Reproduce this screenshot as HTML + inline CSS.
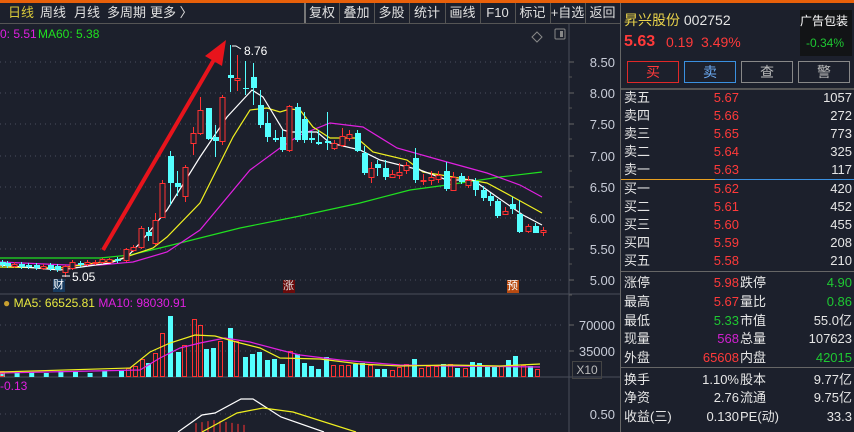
<!DOCTYPE html>
<html><head><meta charset="utf-8"><style>
*{margin:0;padding:0;box-sizing:border-box}
body{width:854px;height:432px;overflow:hidden;background:#1c202c;font-family:"Liberation Sans","Noto Sans CJK SC",sans-serif;color:#e0e0e0;position:relative}
.a{position:absolute;white-space:nowrap}
.t{font-size:13px;line-height:16px}
.r{color:#ff3a3a}.g{color:#1ec832}.w{color:#e6e6e6}.y{color:#e8d24a}
.btn{position:absolute;top:61px;height:22px;width:52px;border:1px solid #888;text-align:center;font-size:14px;line-height:20px;color:#bbb}
.row{position:absolute;left:624px;width:228px;height:18px;font-size:13px;line-height:18px}
.row span{position:absolute}
</style></head><body>
<div class="a" style="left:0;top:0;width:854px;height:3px;background:#e8600a"></div>
<div class="a t" style="left:8px;top:5px;color:#d8c83a">日线</div>
<div class="a t" style="left:40px;top:5px">周线</div>
<div class="a t" style="left:74px;top:5px">月线</div>
<div class="a t" style="left:107px;top:5px">多周期</div>
<div class="a t" style="left:150px;top:5px">更多 〉</div>
<div class="a" style="left:0;top:23px;width:620px;height:1px;background:#555"></div>
<div class="a" style="left:304px;top:3px;width:2px;height:20px;background:#777"></div>
<div id="tb"></div>
<div class="a" style="left:0;top:27px;font-size:12px;color:#e020e0">0: 5.51</div>
<div class="a" style="left:38px;top:27px;font-size:12px;color:#20e020">MA60: 5.38</div>
<svg class="a" style="left:0;top:0" width="620" height="432" id="sv"></svg>
<div class="a" style="left:3px;top:296px;font-size:12px;color:#e8e840"><span style="color:#c8a030">●</span> MA5: 66525.81 <span style="color:#e020e0">MA10: 98030.91</span></div>
<div class="a" style="left:0;top:379px;font-size:12px;color:#e020e0">-0.13</div>
<div class="a" style="left:572px;top:361px;width:30px;height:18px;border:1px solid #444;font-size:12px;line-height:16px;text-align:center;color:#bbb">X10</div>
<div class="a" style="left:53px;top:279px;width:12px;height:13px;background:#173a5e;font-size:11px;line-height:13px;color:#fff">财</div>
<div class="a" style="left:283px;top:280px;width:12px;height:13px;background:#6a0a0a;font-size:11px;line-height:13px;color:#ddd">涨</div>
<div class="a" style="left:507px;top:280px;width:12px;height:13px;background:#b84a10;font-size:11px;line-height:13px;color:#fff">预</div>
<div class="a" style="left:244px;top:44px;font-size:12px;color:#fff">8.76</div>
<div class="a" style="left:72px;top:270px;font-size:12px;color:#fff">5.05</div>
<!-- right panel -->
<div class="a" style="left:620px;top:3px;width:1px;height:429px;background:#666"></div>
<div class="a" style="left:624px;top:10px;font-size:14px"><span class="y">昇兴股份</span> <span class="w">002752</span></div>
<div class="a" style="left:800px;top:10px;width:52px;height:46px;background:#121416"></div>
<div class="a" style="left:800px;top:12px;font-size:12px;color:#fff">广告包装</div>
<div class="a" style="left:806px;top:36px;font-size:12px;color:#1ec832">-0.34%</div>
<div class="a" style="left:624px;top:33px;font-size:16px;font-weight:bold;color:#ff3a3a">5.63</div>
<div class="a" style="left:666px;top:34px;font-size:14px;color:#ff3a3a">0.19 &nbsp;3.49%</div>
<div class="btn" style="left:627px;border-color:#e02828;color:#ff3a3a">买</div>
<div class="btn" style="left:684px;border-color:#3a90e0;color:#6aa8f0">卖</div>
<div class="btn" style="left:741px">查</div>
<div class="btn" style="left:798px">警</div>
<div class="a" style="left:621px;top:88px;width:233px;height:2px;background:#555"></div>
<div class="a" style="left:621px;top:179px;width:94px;height:1px;background:#e8a020"></div>
<div class="a" style="left:715px;top:179px;width:139px;height:1px;background:#3a90e0"></div>
<div class="a" style="left:621px;top:271px;width:233px;height:1px;background:#666"></div>
<div class="a" style="left:621px;top:367px;width:233px;height:1px;background:#666"></div>
<div id="rp"></div>
<script>
var h='';
[['复权',305,339],['叠加',339,374],['多股',374,409],['统计',409,445],['画线',445,480],['F10',480,515],['标记',515,550],['+自选',550,585],['返回',585,620]].forEach(function(b){
h+='<div class="a t" style="left:'+b[1]+'px;top:5px;width:'+(b[2]-b[1])+'px;text-align:center">'+b[0]+'</div><div class="a" style="left:'+b[2]+'px;top:3px;width:1px;height:20px;background:#555"></div>';});
document.getElementById('tb').innerHTML=h;
h='';
var ob=[['卖五','5.67','1057',98],['卖四','5.66','272',116],['卖三','5.65','773',134],['卖二','5.64','325',152],['卖一','5.63','117',170],['买一','5.62','420',189],['买二','5.61','452',207],['买三','5.60','455',225],['买四','5.59','208',243],['买五','5.58','210',261]];
ob.forEach(function(o){h+='<div class="row" style="top:'+(o[3]-9)+'px"><span class="w" style="left:0">'+o[0]+'</span><span class="r" style="right:113px">'+o[1]+'</span><span class="w" style="right:0">'+o[2]+'</span></div>';});
var st=[['涨停','5.98','r','跌停','4.90','g',283],['最高','5.67','r','量比','0.86','g',302],['最低','5.33','g','市值','55.0亿','w',321],['现量','568','m','总量','107623','w',339],['外盘','65608','r','内盘','42015','g',358],['换手','1.10%','w','股本','9.77亿','w',380],['净资','2.76','w','流通','9.75亿','w',398],['收益(三)','0.130','w','PE(动)','33.3','w',417]];
st.forEach(function(o){var c=o[2]=='m'?'style="color:#d020d0;right:113px"':'class="'+o[2]+'" style="right:113px"';
h+='<div class="row" style="top:'+(o[6]-9)+'px"><span class="w" style="left:0">'+o[0]+'</span><span '+c+'>'+o[1]+'</span><span class="w" style="left:116px">'+o[3]+'</span><span class="'+o[5]+'" style="right:0">'+o[4]+'</span></div>';});
document.getElementById('rp').innerHTML=h;
// svg
var s='';
s+='<line x1="569" y1="24" x2="569" y2="432" stroke="#4a4e5a"/>';
s+='<line x1="0" y1="294" x2="620" y2="294" stroke="#4a4e5a"/><line x1="0" y1="377" x2="620" y2="377" stroke="#4a4e5a"/>';
[['8.50',62],['8.00',93],['7.50',124],['7.00',156],['6.50',187],['6.00',218],['5.50',249],['5.00',280]].forEach(function(p){
s+='<line x1="0" y1="'+p[1]+'" x2="565" y2="'+p[1]+'" stroke="#4a4e5e" stroke-dasharray="1,4"/><line x1="569" y1="'+p[1]+'" x2="574" y2="'+p[1]+'" stroke="#666"/><line x1="569" y1="'+(p[1]+15)+'" x2="572" y2="'+(p[1]+15)+'" stroke="#555"/>';
s+='<text x="615" y="'+(p[1]+5)+'" text-anchor="end" font-size="13" fill="#c8ccd8" font-family="Liberation Sans">'+p[0]+'</text>';});
[['70000',325],['35000',351]].forEach(function(p){s+='<line x1="0" y1="'+p[1]+'" x2="565" y2="'+p[1]+'" stroke="#4a4e5e" stroke-dasharray="1,4"/><line x1="569" y1="'+p[1]+'" x2="574" y2="'+p[1]+'" stroke="#666"/><text x="615" y="'+(p[1]+5)+'" text-anchor="end" font-size="13" fill="#c8ccd8" font-family="Liberation Sans">'+p[0]+'</text>';});
s+='<line x1="0" y1="414" x2="565" y2="414" stroke="#4a4e5e" stroke-dasharray="1,4"/><text x="615" y="419" text-anchor="end" font-size="13" fill="#c8ccd8" font-family="Liberation Sans">0.50</text>';
s+='<path d="M537 32l5 5-5 5-5-5z" fill="none" stroke="#888"/><rect x="555" y="29" width="10" height="10" rx="1" fill="none" stroke="#888"/><rect x="560" y="31" width="3" height="6" fill="#888"/>';
function pl(pts,c){return '<polyline points="'+pts+'" fill="none" stroke="'+c+'" stroke-width="1.2"/>';}
s+=pl('0,258 100,258 130,255 160,248 200,238 240,228 280,220 300,216 360,203 410,190 447,185 500,177 542,172','#20e020');
s+=pl('0,262 67,265 100,265 133,262 167,252 200,230 250,170 280,148 300,135 330,123 363,127 397,148 447,162 487,173 520,185 542,197','#e020e0');
s+=pl('0,267 60,268 117,260 153,248 167,237 200,203 233,137 250,110 267,108 280,112 290,109 300,110 313,127 330,138 357,138 373,152 407,160 423,172 453,177 487,183 513,197 542,213','#f0f020');
s+=pl('0,265 60,270 110,263 127,257 140,243 167,210 200,157 227,117 252,90 263,97 283,130 290,132 317,132 330,143 360,150 380,160 420,170 447,180 473,180 497,197 523,215 542,225','#ffffff');
var C=[[2,262,265,260,267,'c'],[7,263,266,261,268,'c'],[14,264,266,262,268,'r'],[21,264,267,262,269,'c'],[28,265,267,263,269,'c'],[36,265,268,263,270,'c'],[43,266,268,264,270,'r'],[50,265,269,263,271,'c'],[57,266,270,264,272,'c'],[65,266,272,265,277,'r'],[72,262,268,260,270,'r'],[80,263,265,261,267,'c'],[87,262,264,260,266,'r'],[95,262,263,260,265,'r'],[102,259,262,258,264,'r'],[109,259,262,258,263,'r'],[117,259,261,257,263,'c'],[126,249,260,248,262,'r'],[133,247,250,245,252,'r'],[141,228,247,226,249,'r'],[148,232,236,227,241,'c'],[155,220,243,213,245,'r'],[162,183,217,180,218,'r'],[170,156,183,151,205,'c'],[177,183,187,171,196,'c'],[185,167,196,165,202,'r'],[193,133,143,127,155,'r'],[200,110,133,97,135,'r'],[208,108,139,108,140,'c'],[215,137,141,125,157,'c'],[222,97,141,95,145,'r'],[230,75,78,45,92,'c'],[237,78,80,55,91,'r'],[245,88,89,61,95,'c'],[253,77,88,63,105,'c'],[260,105,125,90,128,'c'],[267,123,137,112,142,'c'],[275,138,140,130,142,'c'],[282,137,150,130,152,'c'],[289,106,150,105,152,'r'],[297,107,140,103,142,'c'],[304,119,140,112,143,'c'],[311,138,140,131,143,'c'],[318,142,144,130,145,'c'],[327,141,143,112,150,'c'],[334,143,148,140,150,'r'],[342,136,145,128,147,'r'],[349,134,138,130,141,'r'],[357,133,151,130,152,'c'],[364,153,173,146,175,'c'],[371,168,177,162,183,'r'],[377,164,168,160,176,'c'],[385,168,177,160,180,'c'],[392,174,177,170,178,'r'],[399,172,175,163,179,'r'],[406,165,170,162,174,'r'],[415,158,180,148,183,'c'],[423,180,181,174,185,'r'],[431,177,180,171,185,'r'],[438,175,179,171,183,'r'],[446,171,189,162,191,'c'],[453,177,190,172,191,'r'],[461,176,182,173,184,'c'],[468,180,185,176,188,'r'],[475,181,190,178,196,'c'],[483,190,198,186,201,'c'],[490,196,201,193,206,'c'],[497,201,216,199,218,'c'],[505,211,214,207,215,'r'],[512,204,209,197,214,'c'],[519,214,232,200,233,'c'],[528,226,231,224,233,'r'],[535,226,233,223,233,'c'],[543,230,232,227,236,'r']];
C.forEach(function(c){var col=c[5]=='r'?'#ff3232':'#54ffff';var hh=Math.max(c[2]-c[1],1);
s+='<line x1="'+(c[0]+.5)+'" y1="'+c[3]+'" x2="'+(c[0]+.5)+'" y2="'+c[4]+'" stroke="'+col+'"/>';
if(c[5]=='r')s+='<rect x="'+(c[0]-2)+'" y="'+c[1]+'.5" width="5" height="'+hh+'" fill="#1c202c" stroke="'+col+'"/>';
else s+='<rect x="'+(c[0]-2)+'" y="'+c[1]+'" width="6" height="'+hh+'" fill="'+col+'"/>';});
s+='<path d="M232 46h4l5 3" fill="none" stroke="#fff"/><path d="M62 276h8" stroke="#fff"/>';
s+='<line x1="103" y1="250" x2="215" y2="58" stroke="#e8141c" stroke-width="4"/><polygon points="226,40 205,56 222,66" fill="#e8141c"/>';
// volume
var V=[];for(var i=0;i<16;i++)V.push([2+7.3*i,373-(i%3),i%2?'r':'c']);
V=V.concat([[121,371,'c'],[128,368,'r'],[135,366,'r'],[142,359,'r'],[148,363,'c'],[155,353,'r'],[162,333,'r'],[170,316,'c'],[178,352,'c'],[184,345,'r'],[194,319,'r'],[200,325,'r'],[206,349,'c'],[213,348,'c'],[220,341,'r'],[230,328,'c'],[236,341,'r'],[245,357,'c'],[252,354,'c'],[259,352,'c'],[267,360,'c'],[274,359,'c'],[282,364,'c'],[290,351,'r'],[297,354,'c'],[304,363,'c'],[311,366,'c'],[318,369,'c'],[326,357,'c'],[333,365,'r'],[341,365,'r'],[348,365,'r'],[355,364,'c'],[362,363,'c'],[370,365,'r'],[377,369,'c'],[384,369,'c'],[392,370,'r'],[399,367,'r'],[406,364,'r'],[414,359,'c'],[421,368,'r'],[428,366,'r'],[436,366,'r'],[443,364,'c'],[450,364,'r'],[457,368,'c'],[465,368,'r'],[472,362,'c'],[479,363,'c'],[487,366,'c'],[494,366,'c'],[501,366,'r'],[508,360,'c'],[515,356,'c'],[523,365,'r'],[530,366,'c'],[537,369,'r']]);
V.forEach(function(v){if(v[2]=='r')s+='<rect x="'+(v[0]-2)+'.5" y="'+v[1]+'.5" width="4" height="'+(376-v[1])+'" fill="none" stroke="#ff3232"/>';else s+='<rect x="'+(v[0]-2)+'" y="'+v[1]+'" width="5" height="'+(377-v[1])+'" fill="#54ffff"/>';});
s+=pl('0,373 140,370 160,358 180,348 200,343 225,338 250,342 280,350 300,355 340,360 400,365 450,366 540,367','#e020e0');
s+=pl('0,372 130,368 150,352 170,343 195,335 215,336 240,343 260,348 280,358 320,359 360,364 400,366 450,365 500,366 540,364','#f0f020');
// macd
for(var x=196;x<250;x+=6)s+='<line x1="'+x+'" y1="'+(420+Math.abs(x-215)/6)+'" x2="'+x+'" y2="432" stroke="#ff3232"/>';
s+=pl('178,432 202,415 215,413 241,399 253,399 281,417 324,432','#ffffff');
s+=pl('202,432 237,413 263,408 293,412 356,432','#f0f020');
document.getElementById('sv').innerHTML=s;
</script>
</body></html>
